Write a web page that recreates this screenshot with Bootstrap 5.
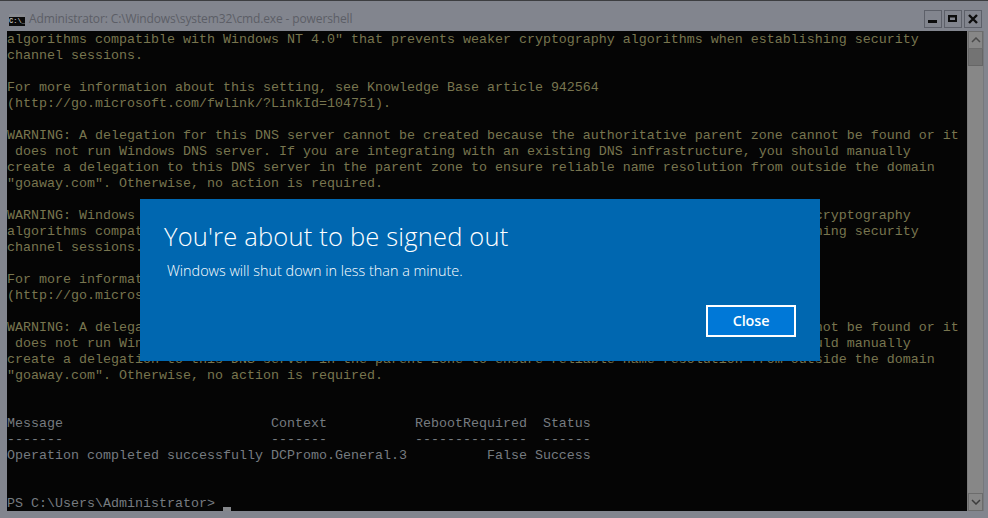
<!DOCTYPE html>
<html lang="en"><head><meta charset="utf-8"><title>cmd</title>
<link href="https://cdn.jsdelivr.net/npm/bootstrap@5.3.0/dist/css/bootstrap.min.css" rel="stylesheet">
<style>
html,body{margin:0;height:518px;overflow:hidden;background:#82858e}
.win{position:relative;width:988px;height:518px;background:#82858e;border-top:1px solid #3c3d40}
.tbar{height:30px;padding:9px 6px 0 9px}
.ticon{width:16px;height:12px;margin-top:4px;background:#0b0b0b;border-top:3px solid #8a8c92;color:#b8b8b8;font:700 7px/9px "Liberation Mono",monospace;overflow:hidden;flex:none}
.ttitle{font:12px/18px "Open Sans",sans-serif;color:#5c5e66;margin-left:4px;letter-spacing:-.13px}
.wbtn{width:18px;height:18px;border:1px solid #5d6069;margin-left:2px;display:flex;align-items:center;justify-content:center}
.wbody{height:480px;padding-left:7px;padding-right:4px}
.term{width:960px;background:#050505;overflow:hidden;padding-top:1px;font:13.333px/16px "Liberation Mono",monospace;white-space:pre}
.warn{color:#78754f}.norm{color:#767b80}
.cursor{display:inline-block;width:8px;height:4px;background:#85878b;vertical-align:-4px}
.sbar{width:17px;background:#878787;border-left:1px solid #7c7c7c;border-right:1px solid #76787c}
.sbtn{height:18px;border:1px solid #6c6c6c;display:flex;align-items:center;justify-content:center}
.sthumb{height:17px;background:#737373;border:1px solid #666;border-top:0}
.dlg{position:absolute;left:140px;top:198px;width:680px;height:162px;background:#0067b0;color:#fff}
.dtitle{font:300 25.5px/32px "Open Sans",sans-serif;margin:21px 0 0 24px;letter-spacing:.19px}
.dtext{font:300 14.4px/20px "Open Sans",sans-serif;margin:9px 0 0 27px}
.dbtn{position:absolute;right:24px;bottom:24px;width:90px;height:32px;padding:0;border:2px solid #fff;border-radius:0;background:#0078d7;color:#fff;font:600 14.4px/28px "Open Sans",sans-serif;letter-spacing:-.1px}
</style></head><body>
<div class="win">
<div class="tbar d-flex">
<div class="ticon">C:\_</div>
<div class="ttitle flex-grow-1">Administrator: C:\Windows\system32\cmd.exe - powershell</div>
<div class="wbtn"><svg width="10" height="10"><rect x="0" y="6" width="9" height="3" fill="#0d0d0d"/></svg></div>
<div class="wbtn"><svg width="10" height="10"><path d="M0 1h9v7H0z M2 3.500v2.500h5V3.500z" fill="#0d0d0d" fill-rule="evenodd"/></svg></div>
<div class="wbtn"><svg width="10" height="10"><path d="M1 1l8 8M9 1l-8 8" stroke="#0d0d0d" stroke-width="2.400" fill="none"/></svg></div>
</div>
<div class="wbody d-flex">
<div class="term"><span class="warn">algorithms compatible with Windows NT 4.0" that prevents weaker cryptography algorithms when establishing security
channel sessions.

For more information about this setting, see Knowledge Base article 942564
(http://go.microsoft.com/fwlink/?LinkId=104751).

WARNING: A delegation for this DNS server cannot be created because the authoritative parent zone cannot be found or it
 does not run Windows DNS server. If you are integrating with an existing DNS infrastructure, you should manually
create a delegation to this DNS server in the parent zone to ensure reliable name resolution from outside the domain
"goaway.com". Otherwise, no action is required.

WARNING: Windows Server 2012 domain controllers have a default for the security setting named "Allow cryptography
algorithms compatible with Windows NT 4.0" that prevents weaker cryptography algorithms when establishing security
channel sessions.

For more information about this setting, see Knowledge Base article 942564
(http://go.microsoft.com/fwlink/?LinkId=104751).

WARNING: A delegation for this DNS server cannot be created because the authoritative parent zone cannot be found or it
 does not run Windows DNS server. If you are integrating with an existing DNS infrastructure, you should manually
create a delegation to this DNS server in the parent zone to ensure reliable name resolution from outside the domain
"goaway.com". Otherwise, no action is required.
</span><span class="norm">

Message                          Context           RebootRequired  Status
-------                          -------           --------------  ------
Operation completed successfully DCPromo.General.3          False Success


PS C:\Users\Administrator&gt; <span class="cursor"></span></span></div>
<div class="sbar d-flex flex-column">
<div class="sbtn"><svg width="10" height="6"><path d="M1 5l4-4 4 4" stroke="#4a4a4a" stroke-width="1.500" fill="none"/></svg></div>
<div class="sthumb"></div>
<div class="flex-grow-1"></div>
<div class="sbtn"><svg width="10" height="6"><path d="M1 1l4 4 4-4" stroke="#3c3c3c" stroke-width="1.500" fill="none"/></svg></div>
</div>
</div>
<div class="dlg">
<div class="dtitle">You're about to be signed out</div>
<div class="dtext">Windows will shut down in less than a minute.</div>
<button class="btn dbtn" type="button">Close</button>
</div>
</div>
<script src="https://cdn.jsdelivr.net/npm/bootstrap@5.3.0/dist/js/bootstrap.bundle.min.js"></script>
</body></html>
